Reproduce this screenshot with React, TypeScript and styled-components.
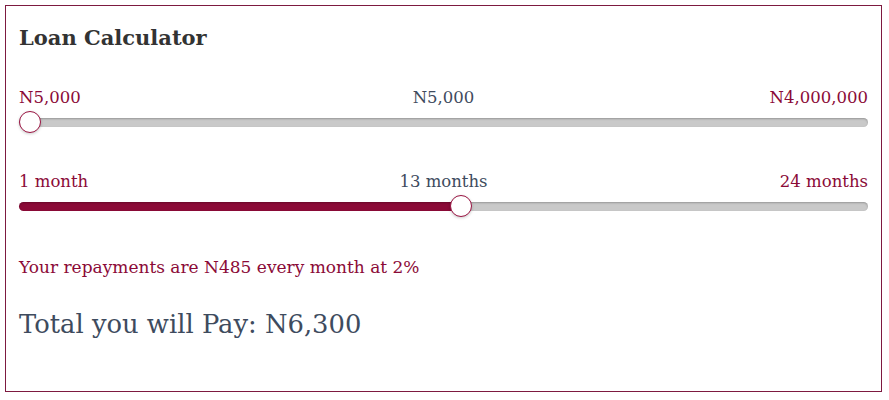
import React, { useState } from 'react';
import styled, { createGlobalStyle } from 'styled-components';

const GlobalStyle = createGlobalStyle`
  html, body {
    margin: 0;
    padding: 0;
    background: #fff;
  }
  body {
    font-family: "DejaVu Serif", "Liberation Serif", serif;
  }
`;

const Card = styled.div`
  margin: 5px;
  width: 877px;
  height: 387px;
  box-sizing: border-box;
  border: 1px solid #7d1a40;
  padding: 18px 13px 0 13px;
`;

const Title = styled.h1`
  margin: 0;
  font-size: 21px;
  line-height: 28px;
  font-weight: 700;
  color: #333;
`;

const SliderBlock = styled.div<{ $top: number }>`
  margin-top: ${(p) => p.$top}px;
  display: flex;
  flex-direction: column;
`;

const Labels = styled.div`
  display: grid;
  grid-template-columns: 1fr auto 1fr;
  align-items: center;
  font-size: 16.5px;
  line-height: 20px;
`;

const Edge = styled.span<{ $end?: boolean }>`
  color: #8b0a37;
  justify-self: ${(p) => (p.$end ? 'end' : 'start')};
`;

const Current = styled.span`
  color: #3e4b5e;
`;

const Range = styled.input<{ $fill: number }>`
  -webkit-appearance: none;
  appearance: none;
  width: 100%;
  margin: 3px 0 0 0;
  height: 22px;
  background: transparent;
  outline: none;

  &::-webkit-slider-runnable-track {
    height: 9px;
    border-radius: 5px;
    background: linear-gradient(
      to right,
      #8b0a37 0%,
      #8b0a37 ${(p) => p.$fill}%,
      #c9c9c9 ${(p) => p.$fill}%,
      #c9c9c9 100%
    );
    box-shadow: inset 0 1px 2px rgba(0, 0, 0, 0.25);
  }

  &::-webkit-slider-thumb {
    -webkit-appearance: none;
    appearance: none;
    width: 22px;
    height: 22px;
    margin-top: -6.5px;
    border-radius: 50%;
    background: #fff;
    border: 1.5px solid #9a1442;
    box-sizing: border-box;
    box-shadow: 0 1px 3px rgba(0, 0, 0, 0.2);
    cursor: pointer;
  }
`;

const Repayment = styled.p`
  margin: 40px 0 0 0;
  font-size: 17px;
  line-height: 20px;
  color: #8b0a37;
`;

const Total = styled.p`
  margin: 31px 0 0 0;
  font-size: 25.8px;
  line-height: 32px;
  color: #3e4b5e;
`;

const TRACK = 849;
const THUMB = 22;

const fillPercent = (value: number, min: number, max: number) => {
  const frac = (value - min) / (max - min);
  return ((THUMB / 2 + frac * (TRACK - THUMB)) / TRACK) * 100;
};

const money = (n: number) => 'N' + n.toLocaleString('en-US');

const App = () => {
  const [amount, setAmount] = useState(5000);
  const [months, setMonths] = useState(13);

  const rate = 0.02;
  const monthly = Math.round((amount * (1 + rate * months)) / months);
  const total = Math.round((amount * (1 + rate * months)) / 100) * 100;

  return (
    <>
      <GlobalStyle />
      <Card>
        <Title>Loan Calculator</Title>

        <SliderBlock $top={36}>
          <Labels>
            <Edge>N5,000</Edge>
            <Current>{money(amount)}</Current>
            <Edge $end>N4,000,000</Edge>
          </Labels>
          <Range
            type="range"
            min={5000}
            max={4000000}
            step={5000}
            value={amount}
            $fill={0}
            onChange={(e) => setAmount(Number(e.target.value))}
          />
        </SliderBlock>

        <SliderBlock $top={39}>
          <Labels>
            <Edge>1 month</Edge>
            <Current>{months} months</Current>
            <Edge $end>24 months</Edge>
          </Labels>
          <Range
            type="range"
            min={1}
            max={24}
            value={months}
            $fill={fillPercent(months, 1, 24)}
            onChange={(e) => setMonths(Number(e.target.value))}
          />
        </SliderBlock>

        <Repayment>
          Your repayments are {money(monthly)} every month at 2%
        </Repayment>
        <Total>Total you will Pay: {money(total)}</Total>
      </Card>
    </>
  );
};

export default App;
